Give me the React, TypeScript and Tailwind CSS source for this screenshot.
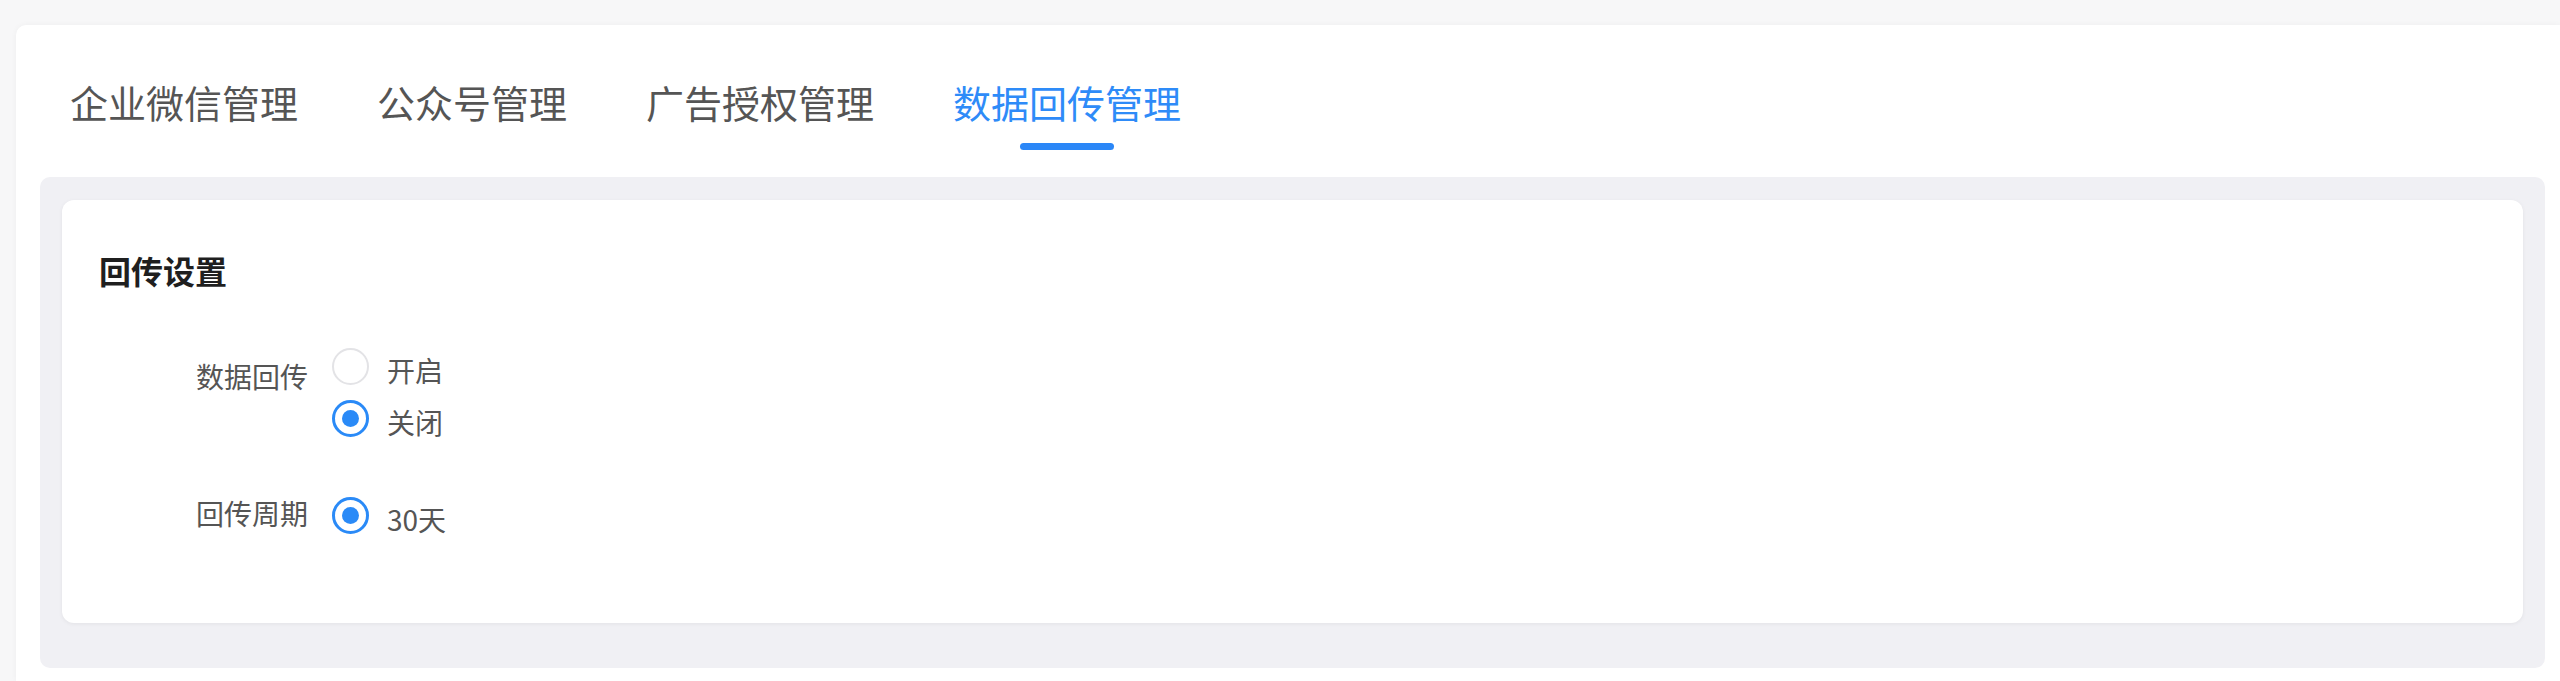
import { useState } from "react";

const tabs = ["企业微信管理", "公众号管理", "广告授权管理", "数据回传管理"];

function Radio({
  checked,
  label,
  onSelect,
}: {
  checked: boolean;
  label: string;
  onSelect?: () => void;
}) {
  return (
    <button
      type="button"
      onClick={onSelect}
      className="flex h-[52px] items-center gap-[18px] text-left"
    >
      {checked ? (
        <span className="flex h-[37px] w-[37px] items-center justify-center rounded-full border-[3px] border-[#2a8af7] bg-white">
          <span className="h-[17px] w-[17px] rounded-full bg-[#2a8af7]" />
        </span>
      ) : (
        <span className="h-[37px] w-[37px] rounded-full border-2 border-[#e3e3e6] bg-white" />
      )}
      <span className="mt-[8px] text-[28px] leading-[28px] text-[#555]">{label}</span>
    </button>
  );
}

export default function App() {
  const [active, setActive] = useState(3);
  const [enabled, setEnabled] = useState(false);

  return (
    <div
      className="flex h-[681px] flex-col overflow-hidden bg-[#f7f7f8] pl-[16px] pt-[25px]"
      style={{ fontFamily: '"Noto Sans CJK SC", "Noto Sans", sans-serif' }}
    >
      <div className="flex flex-1 flex-col rounded-tl-[10px] bg-white pl-[24px] pr-[15px] shadow-[0_0_6px_rgba(0,0,0,0.04)]">
        {/* tabs */}
        <div className="flex gap-[79px] pl-[30px] pt-[58px]">
          {tabs.map((t, i) => (
            <button
              key={t}
              type="button"
              onClick={() => setActive(i)}
              className="flex flex-col items-center"
            >
              <span
                className={
                  i === active
                    ? "text-[38px] leading-[37px] text-[#2e8bf8]"
                    : "text-[38px] leading-[37px] text-[#555]"
                }
              >
                {t}
              </span>
              <span
                className={
                  i === active
                    ? "mt-[23px] h-[7px] w-[94px] rounded-full bg-[#2b87f7]"
                    : "mt-[23px] h-[7px] w-[94px] bg-transparent"
                }
              />
            </button>
          ))}
        </div>

        {/* panel */}
        <div className="mt-[27px] rounded-[10px] bg-[#f0f0f4] px-[22px] pb-[45px] pt-[23px]">
          <div className="rounded-[12px] bg-white pb-[82px] pl-[37px] pt-[54px] shadow-[0_1px_4px_rgba(0,0,0,0.06)]">
            <h2 className="text-[32px] font-bold leading-[32px] text-[#1f1f1f]">回传设置</h2>

            <div className="mt-[54px] flex items-start gap-[24px]">
              <div className="mt-[22px] w-[209px] text-right text-[28px] leading-[28px] text-[#555]">
                数据回传
              </div>
              <div className="flex flex-col">
                <Radio checked={enabled} label="开启" onSelect={() => setEnabled(true)} />
                <Radio checked={!enabled} label="关闭" onSelect={() => setEnabled(false)} />
              </div>
            </div>

            <div className="mt-[45px] flex items-start gap-[24px]">
              <div className="mt-[10px] w-[209px] text-right text-[28px] leading-[28px] text-[#555]">
                回传周期
              </div>
              <Radio checked label="30天" />
            </div>
          </div>
        </div>
      </div>
    </div>
  );
}
